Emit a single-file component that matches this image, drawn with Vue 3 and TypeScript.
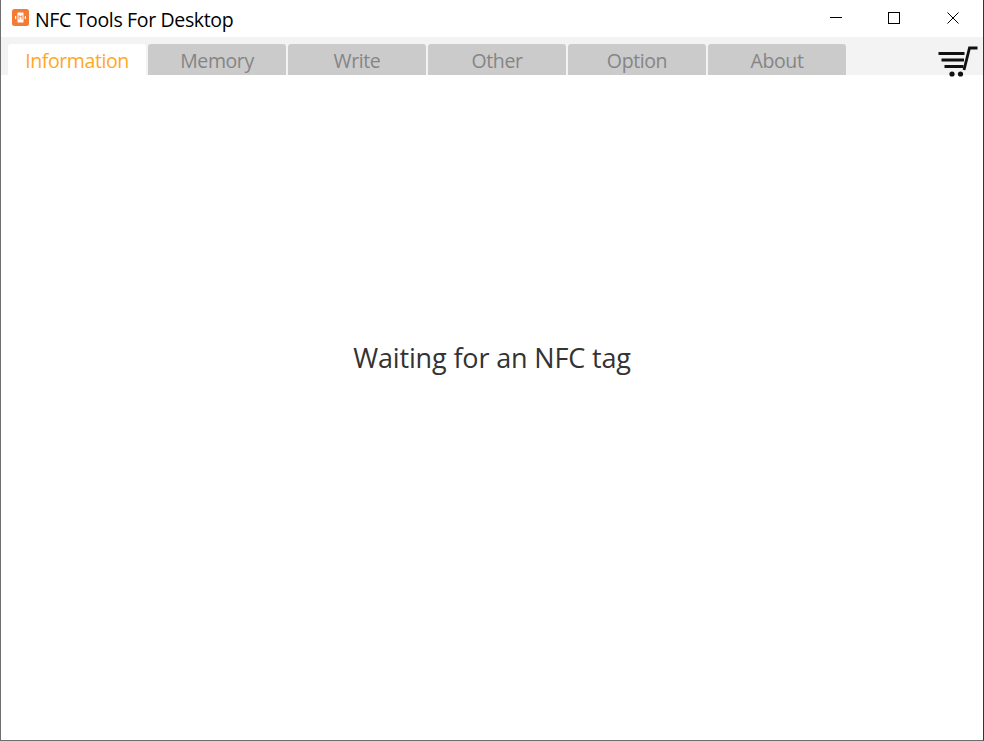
<script setup lang="ts">
import { ref } from 'vue';

const tabs = ['Information', 'Memory', 'Write', 'Other', 'Option', 'About'];
const activeTab = ref('Information');
</script>

<template>
  <div class="window">
    <header class="titlebar">
      <svg class="app-icon" width="17" height="17" viewBox="0 0 17 17">
        <rect width="17" height="17" rx="2.5" fill="#f47b36" />
        <rect x="5.5" y="3.500" width="6" height="10" rx="0.5" fill="#fff" />
        <path d="M7 10.500v-4l1.500 1.500L10 6.500v4" stroke="#f47b36" fill="none" />
        <rect x="3" y="7" width="1.2" height="3" fill="#fff" />
        <rect x="12.800" y="7" width="1.2" height="3" fill="#fff" />
      </svg>
      <span class="title">NFC Tools For Desktop</span>
      <div class="controls">
        <button class="ctl">
          <svg width="12" height="12" viewBox="0 0 12 12"><path d="M0 5.500h12" stroke="#000" fill="none" /></svg>
        </button>
        <button class="ctl">
          <svg width="12" height="12" viewBox="0 0 12 12"><rect x="0.5" y="0.5" width="11" height="11" stroke="#000" fill="none" /></svg>
        </button>
        <button class="ctl">
          <svg width="12" height="12" viewBox="0 0 12 12"><path d="M0.500 0.500l11 11M11.500 0.500l-11 11" stroke="#000" fill="none" /></svg>
        </button>
      </div>
    </header>

    <nav class="tabstrip">
      <button
        v-for="tab in tabs"
        :key="tab"
        class="tab"
        :class="{ active: tab === activeTab }"
        @click="activeTab = tab"
      >{{ tab }}</button>
      <svg class="cart" width="40" height="32" viewBox="0 0 40 32">
        <path d="M0.500 8.500h26M3.500 15h22.500M6.500 21.500h19" stroke="#111" stroke-width="3" fill="none" />
        <path d="M26 25L31.500 3H39.500" stroke="#111" stroke-width="2.800" fill="none" />
        <circle cx="14" cy="29" r="2.600" fill="#111" />
        <circle cx="22.500" cy="29" r="2.600" fill="#111" />
      </svg>
    </nav>

    <main class="content">
      <p class="waiting">Waiting for an NFC tag</p>
    </main>
  </div>
</template>

<style>
html, body {
  margin: 0;
  background: #fff;
}
</style>

<style scoped>
.window {
  box-sizing: border-box;
  width: 984px;
  height: 741px;
  display: flex;
  flex-direction: column;
  background: #fff;
  border-left: 1px solid #6e6e6e;
  border-right: 1px solid #333;
  border-bottom: 1px solid #6e6e6e;
  font-family: "Open Sans", "Noto Sans", sans-serif;
}

.titlebar {
  height: 37px;
  flex: none;
  display: flex;
  align-items: center;
  padding-left: 11px;
}

.app-icon {
  margin-bottom: 2px;
}

.title {
  margin-left: 6px;
  margin-top: 2px;
  font-size: 19.500px;
  letter-spacing: -0.35px;
  color: #000;
}

.controls {
  margin-left: auto;
  display: flex;
  margin-right: 1px;
}

.ctl {
  width: 58px;
  height: 37px;
  padding: 0 0 2px;
  border: 0;
  background: none;
  display: flex;
  align-items: center;
  justify-content: center;
}

.ctl:nth-child(1) {
  width: 56px;
}

.ctl:nth-child(2) {
  width: 60px;
}

.tabstrip {
  height: 38px;
  flex: none;
  display: flex;
  align-items: flex-end;
  gap: 2px;
  padding-left: 7px;
  background: #f3f3f3;
}

.tab {
  width: 138px;
  height: 31px;
  padding: 2px 0 0;
  border: 0;
  border-radius: 3px 3px 0 0;
  background: #cbcbcb;
  color: #858585;
  font: inherit;
  font-size: 19.500px;
  letter-spacing: -0.4px;
}

.tab.active {
  background: #fff;
  color: #ffa726;
}

.cart {
  margin-left: auto;
  margin-right: 5px;
  margin-bottom: -2px;
  align-self: flex-end;
}

.content {
  flex: 1;
  display: flex;
  justify-content: center;
  padding-top: 263px;
}

.waiting {
  margin: 0;
  height: 40px;
  font-size: 27px;
  line-height: 40px;
  letter-spacing: -0.15px;
  color: #333;
}
</style>
